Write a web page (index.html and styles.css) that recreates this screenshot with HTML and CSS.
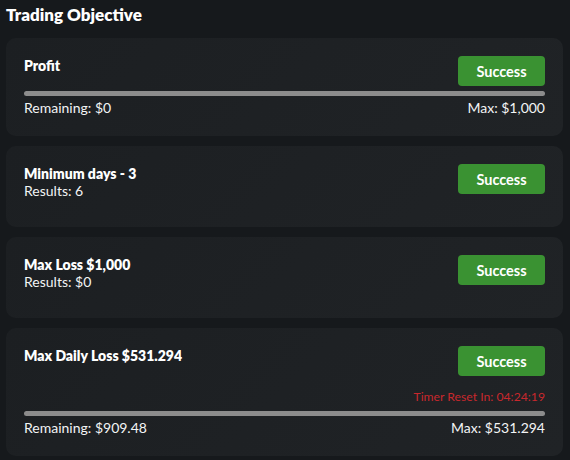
FILE: index.html
```html
<!DOCTYPE html>
<html lang="en">
<head>
<meta charset="utf-8">
<title>Trading Objective</title>
<link rel="stylesheet" href="styles.css">
</head>
<body>
<div class="page">
  <h2 class="page-title">Trading Objective</h2>

  <section class="card">
    <div class="head">
      <div class="info">
        <div class="title">Profit</div>
      </div>
      <span class="badge">Success</span>
    </div>
    <div class="bar"></div>
    <div class="foot"><span>Remaining: $0</span><span>Max: $1,000</span></div>
  </section>

  <section class="card card-short">
    <div class="head">
      <div class="info">
        <div class="title">Minimum days - 3</div>
        <div class="sub">Results: 6</div>
      </div>
      <span class="badge">Success</span>
    </div>
  </section>

  <section class="card card-short">
    <div class="head">
      <div class="info">
        <div class="title">Max Loss $1,000</div>
        <div class="sub">Results: $0</div>
      </div>
      <span class="badge">Success</span>
    </div>
  </section>

  <section class="card">
    <div class="head">
      <div class="info">
        <div class="title">Max Daily Loss $531.294</div>
      </div>
      <span class="badge">Success</span>
    </div>
    <div class="timer">Timer Reset In: 04:24:19</div>
    <div class="bar"></div>
    <div class="foot"><span>Remaining: $909.48</span><span>Max: $531.294</span></div>
  </section>
</div>
</body>
</html>
```

FILE: styles.css
```css
* { box-sizing: border-box; }
html, body {
  margin: 0;
  background: #16191c;
}
body {
  font-family: Lato, "Noto Sans", sans-serif;
  color: #f3f4f5;
}
.page {
  padding: 3px 7px 0 6px;
}
.page-title {
  margin: 0 0 11px 0;
  font-size: 17px;
  line-height: 24px;
  font-weight: 800;
  color: #ffffff;
}
.card {
  background: linear-gradient(135deg, #1c1f22 0%, #202326 100%);
  border-radius: 10px;
  padding: 18px;
  margin-bottom: 10px;
}
.card-short {
  min-height: 81px;
}
.head {
  display: flex;
  justify-content: space-between;
  align-items: flex-start;
}
.title {
  font-size: 14px;
  font-weight: 800;
  line-height: 17px;
  padding-top: 1px;
  color: #ffffff;
}
.sub {
  font-size: 14px;
  line-height: 17px;
}
.badge {
  width: 87px;
  height: 30px;
  border-radius: 4px;
  background: #3a9232;
  color: #ffffff;
  font-size: 14.5px;
  font-weight: 700;
  display: flex;
  align-items: center;
  justify-content: center;
}
.bar {
  margin-top: 5px;
  height: 5px;
  border-radius: 3px;
  background: #8c8c8c;
}
.timer {
  margin-top: 12px;
  text-align: right;
  font-size: 12.2px;
  line-height: 17px;
  color: #c8282d;
}
.timer + .bar {
  margin-top: 6px;
}
.foot {
  display: flex;
  justify-content: space-between;
  font-size: 14px;
  line-height: 20px;
  margin-top: 2px;
}
```
